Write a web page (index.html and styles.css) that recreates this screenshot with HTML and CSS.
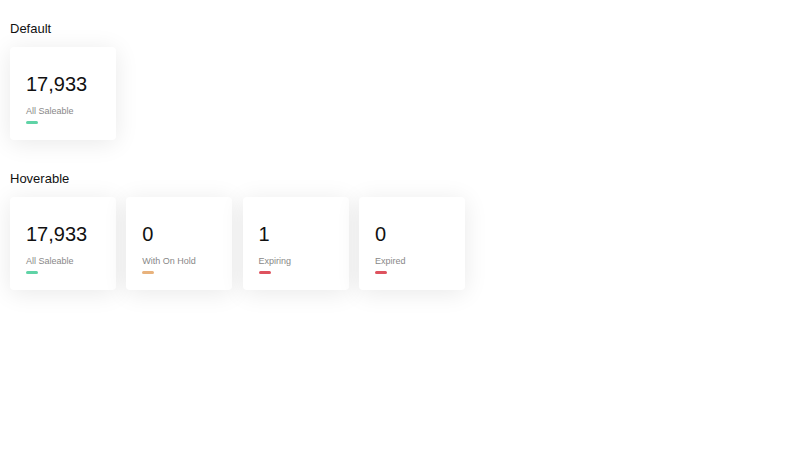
FILE: index.html
```html
<!DOCTYPE html>
<html lang="en">
<head>
  <meta charset="UTF-8" />
  <title>Stat Cards</title>
  <link rel="stylesheet" href="styles.css">
</head>
<body>

  <section class="group">
    <h3>Default</h3>
    <div class="cards">
      <div class="card">
        <div class="value">17,933</div>
        <div class="label">All Saleable</div>
        <span class="bar bar-green"></span>
      </div>
    </div>
  </section>

  <section class="group">
    <h3>Hoverable</h3>
    <div class="cards">
      <div class="card hoverable">
        <div class="value">17,933</div>
        <div class="label">All Saleable</div>
        <span class="bar bar-green"></span>
      </div>
      <div class="card hoverable">
        <div class="value">0</div>
        <div class="label">With On Hold</div>
        <span class="bar bar-orange"></span>
      </div>
      <div class="card hoverable">
        <div class="value">1</div>
        <div class="label">Expiring</div>
        <span class="bar bar-red"></span>
      </div>
      <div class="card hoverable">
        <div class="value">0</div>
        <div class="label">Expired</div>
        <span class="bar bar-red"></span>
      </div>
    </div>
  </section>

</body>
</html>
```

FILE: styles.css
```css
body {
  font-family: "Liberation Sans", Arial, sans-serif;
  margin: 0;
  padding: 21px 10px;
  background: #fff;
  color: #111;
}

.group {
  margin-bottom: 31px;
}

h3 {
  font-size: 13px;
  font-weight: normal;
  margin: 0 0 10px;
  line-height: 16px;
}

.cards {
  display: flex;
  gap: 10.3px;
}

.card {
  width: 106px;
  box-sizing: border-box;
  padding: 26px 16px 16px;
  background: #fff;
  border-radius: 4px;
  box-shadow: 0 3px 24px rgba(0, 0, 0, 0.09);
  transition: box-shadow 0.3s;
}

.card.hoverable:hover {
  box-shadow: 0 6px 30px rgba(0, 0, 0, 0.15);
}

.value {
  font-size: 20px;
  line-height: 23px;
  color: #111;
}

.label {
  font-size: 9px;
  line-height: 11px;
  margin-top: 10px;
  color: #888;
}

.bar {
  display: block;
  width: 12px;
  height: 3px;
  margin-top: 4px;
  border-radius: 2px;
}

.bar-green {
  background-color: #5fd3a6;
}

.bar-orange {
  background-color: #e8b27c;
}

.bar-red {
  background-color: #de525e;
}
```
